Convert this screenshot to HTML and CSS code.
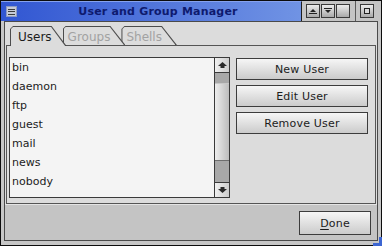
FILE: index.html
```html
<!DOCTYPE html>
<html>
<head>
<meta charset="utf-8">
<title>User and Group Manager</title>
<link rel="stylesheet" href="styles.css">
</head>
<body>
<div class="window">
  <div class="titlebar">
    <div class="title-main">
      <div class="menu-btn"><span></span><span></span><span></span></div>
      <div class="title">User and Group Manager</div>
    </div>
    <div class="title-ctrls">
      <div class="tbtn"><svg width="8" height="8" viewBox="0 0 8 8"><polygon points="1,5 4,2 7,5" fill="#222"/><rect x="0" y="6" width="8" height="1" fill="#222"/></svg></div>
      <div class="tbtn"><svg width="8" height="8" viewBox="0 0 8 8"><rect x="0" y="1" width="8" height="1" fill="#222"/><polygon points="1,3 4,6 7,3" fill="#222"/></svg></div>
      <div class="tbtn"></div>
      <div class="tsep"></div>
      <div class="tbtn"><svg width="6" height="6" viewBox="0 0 6 6"><rect x="0.5" y="0.5" width="5" height="5" fill="#d8d8d8" stroke="#222" stroke-width="1"/></svg></div>
    </div>
  </div>
  <div class="client">
    <div class="tabs">
      <div class="tab tab-first active">Users</div>
      <div class="tab tab-second">Groups</div>
      <div class="tab tab-third">Shells</div>
    </div>
    <div class="panel">
      <div class="listbox">
        <ul class="items">
          <li>bin</li>
          <li>daemon</li>
          <li>ftp</li>
          <li>guest</li>
          <li>mail</li>
          <li>news</li>
          <li>nobody</li>
        </ul>
        <div class="scrollbar">
          <div class="sb-btn sb-up"><svg width="9" height="6" viewBox="0 0 9 6"><polygon points="4.5,0 9,4 6.5,4 6.5,6 2.5,6 2.5,4 0,4" fill="#2a2a2a"/></svg></div>
          <div class="sb-track"><div class="sb-thumb"></div></div>
          <div class="sb-btn sb-down"><svg width="9" height="6" viewBox="0 0 9 6"><polygon points="2.5,0 6.5,0 6.5,2 9,2 4.5,6 0,2 2.5,2" fill="#2a2a2a"/></svg></div>
        </div>
      </div>
      <div class="actions">
        <button class="btn">New User</button>
        <button class="btn">Edit User</button>
        <button class="btn">Remove User</button>
      </div>
    </div>
    <div class="footer">
      <button class="btn btn-done"><u>D</u>one</button>
    </div>
  </div>
  <div class="grip"></div>
</div>
</body>
</html>
```
FILE: styles.css
```css
* { box-sizing: border-box; }
html, body { margin: 0; padding: 0; }
body {
  width: 382px;
  height: 246px;
  overflow: hidden;
  background: #000;
  font-family: "DejaVu Sans", Verdana, sans-serif;
  font-size: 11px;
  color: #1c1c1c;
}
.window {
  position: relative;
  width: 382px;
  height: 246px;
  border: 1px solid #0c0c0c;
  background: #c6c6c6;
  display: flex;
  flex-direction: column;
}
.grip {
  position: absolute;
  right: -1px;
  bottom: -1px;
  width: 9px;
  height: 9px;
  border-right: 3px solid #3d66d2;
  border-bottom: 3px solid #3d66d2;
}
.titlebar {
  height: 20px;
  flex: none;
  display: flex;
}
.title-main {
  flex: 1;
  display: flex;
  align-items: center;
  padding-left: 5px;
  background: linear-gradient(90deg, #3156d2, #7093e4);
  border-top: 1px solid #86a2ee;
  border-right: 1px solid #1e1e1e;
}
.menu-btn {
  width: 11px;
  height: 11px;
  background: #c6cad6;
  border: 1px solid #8d9bc4;
  display: flex;
  flex-direction: column;
  justify-content: space-evenly;
  padding: 0 1px;
}
.menu-btn span {
  height: 1px;
  background: #3c3c3c;
}
.title {
  flex: 1;
  text-align: center;
  font-weight: bold;
  font-size: 11px;
  letter-spacing: 0.2px;
  color: #0e1a6e;
  padding-right: 2px;
}
.title-ctrls {
  width: 79px;
  flex: none;
  display: flex;
  align-items: center;
  gap: 1px;
  padding-left: 4px;
  background: #c4c4c4;
}
.tbtn {
  width: 14px;
  height: 14px;
  border: 1px solid #3a3a3a;
  background: linear-gradient(#ececec, #a9a9a9);
  display: flex;
  align-items: center;
  justify-content: center;
}
.tsep {
  width: 1px;
  height: 20px;
  background: #5a5a5a;
  margin: 0 3px 0 4px;
}
.client {
  flex: 1;
  margin: 0 3px 4px 3px;
  border: 1px solid #4a4a4a;
  background: #dcdcdc;
  display: flex;
  flex-direction: column;
}
.tabs {
  position: relative;
  z-index: 2;
  height: 23px;
  flex: none;
  display: flex;
  align-items: flex-start;
  padding: 4px 0 0 5px;
}
.tab {
  position: relative;
  height: 19px;
  padding: 4px 15px 0 5px;
  margin-right: -4px;
  font-size: 12px;
  line-height: 14px;
  color: #a2a2a2;
}
.tab::before,
.tab::after {
  content: "";
  position: absolute;
  z-index: -1;
}
.tab::before {
  inset: 0;
  background: #4c4c4c;
  clip-path: polygon(0 100%, 0 3px, 3px 0, calc(100% - 15px) 0, 100% 100%);
}
.tab::after {
  inset: 1px 1.5px 0 1px;
  background: #dcdcdc;
  clip-path: polygon(0 100%, 0 2px, 2px 0, calc(100% - 14px) 0, 100% 100%);
}
.tab-first { z-index: 3; padding-left: 8px; }
.tab-second { z-index: 2; }
.tab-third { z-index: 1; }
.tab.active {
  height: 20px;
  color: #1c1c1c;
}
.panel {
  position: relative;
  z-index: 1;
  height: 159px;
  flex: none;
  margin: 0 1px 0 1px;
  border: 1px solid #555;
  background: #dcdcdc;
  display: flex;
  gap: 6px;
  padding: 11px 7px 5px 2px;
}
.listbox {
  width: 221px;
  height: 141px;
  border: 1px solid #3a3a3a;
  background: #f4f4f4;
  display: flex;
}
.items {
  flex: 1;
  list-style: none;
  margin: 0;
  padding: 0 0 0 2px;
}
.items li {
  height: 19px;
  line-height: 20px;
}
.scrollbar {
  width: 15px;
  border-left: 1px solid #3a3a3a;
  display: flex;
  flex-direction: column;
}
.sb-btn {
  height: 15px;
  flex: none;
  display: flex;
  align-items: center;
  justify-content: center;
  background: linear-gradient(90deg, #f0f0f0, #cdcdcd);
}
.sb-up { border-bottom: 1px solid #3a3a3a; }
.sb-down { border-top: 1px solid #3a3a3a; }
.sb-track {
  flex: 1;
  background: #a8a8a8;
  padding: 10px 0 21px 0;
}
.sb-thumb {
  height: 78px;
  background: linear-gradient(90deg, #ededed, #bdbdbd);
  border-top: 1px solid #c8c8c8;
  border-bottom: 1px solid #6e6e6e;
}
.actions {
  width: 132px;
  display: flex;
  flex-direction: column;
  gap: 5px;
  padding-top: 1px;
}
.btn {
  height: 22px;
  margin: 0;
  padding: 0;
  border: 1px solid #3c3c3c;
  background: linear-gradient(#f6f6f6, #cbcbcb);
  font-family: "DejaVu Sans", Verdana, sans-serif;
  font-size: 11px;
  letter-spacing: 0.2px;
  color: #1c1c1c;
  text-align: center;
}
.footer {
  flex: 1;
  display: flex;
  justify-content: flex-end;
  align-items: flex-start;
  padding: 6px 6px 0 0;
  background: #c4c4c4;
  border-top: 1px solid #e4e4e4;
}
.btn-done {
  width: 72px;
  height: 24px;
}
.btn-done u {
  text-decoration-thickness: 1px;
  text-underline-offset: 2px;
}
```
